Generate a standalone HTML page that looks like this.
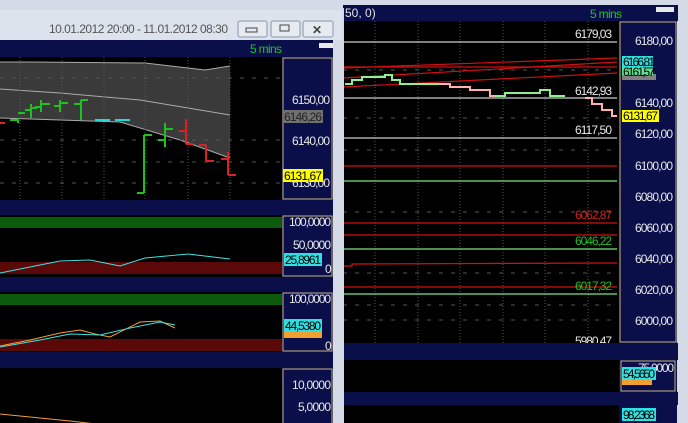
<!DOCTYPE html>
<html><head><meta charset="utf-8"><style>
html,body{margin:0;padding:0;width:688px;height:423px;overflow:hidden;background:#d4dbe6}
svg{display:block;font-family:"Liberation Sans",sans-serif}
</style></head><body>
<svg width="688" height="423" viewBox="0 0 688 423" xmlns="http://www.w3.org/2000/svg">
<rect x="0" y="0" width="688" height="423" fill="#d4dbe6"/>
<!-- RIGHT WINDOW -->
<rect x="343" y="5" width="335" height="16" fill="#0a0f4a"/>
<text x="345" y="17" fill="#e0e0e0" font-size="12">50, 0)</text>
<text x="590" y="18" fill="#22c322" font-size="12" textLength="32">5 mins</text>
<rect x="656" y="7" width="18" height="5" fill="#e8e8e8"/>
<rect x="343" y="21" width="276" height="322" fill="#000"/>
<rect x="619" y="21" width="58" height="322" fill="#0a0f4a"/>
<rect x="620" y="22" width="56" height="320" fill="none" stroke="#c8b080" stroke-width="1"/>
<g stroke="#555" stroke-dasharray="1,2">
<line x1="375" y1="21" x2="375" y2="343"/><line x1="418" y1="21" x2="418" y2="343"/><line x1="460" y1="21" x2="460" y2="343"/><line x1="503" y1="21" x2="503" y2="343"/><line x1="545" y1="21" x2="545" y2="343"/><line x1="588" y1="21" x2="588" y2="343"/>
</g>
<g stroke="#555" stroke-dasharray="4,8">
<line x1="343" y1="70" x2="617" y2="70"/><line x1="343" y1="118" x2="617" y2="118"/><line x1="343" y1="150" x2="617" y2="150"/><line x1="343" y1="212" x2="617" y2="212"/><line x1="343" y1="273" x2="617" y2="273"/><line x1="343" y1="305" x2="617" y2="305"/><line x1="343" y1="320" x2="617" y2="320"/>
</g>
<line x1="343" y1="42" x2="617" y2="42" stroke="#fff"/>
<line x1="343" y1="98" x2="617" y2="98" stroke="#fff"/>
<line x1="343" y1="138" x2="617" y2="138" stroke="#fff"/>
<g stroke="#d01010" stroke-width="1.2">
<line x1="343" y1="68" x2="617" y2="58"/><line x1="343" y1="67" x2="617" y2="67"/><line x1="343" y1="78" x2="617" y2="62"/><line x1="343" y1="87" x2="617" y2="73"/>
<line x1="343" y1="166" x2="617" y2="166"/><line x1="343" y1="223" x2="617" y2="223"/><line x1="343" y1="235" x2="617" y2="235"/>
<polyline fill="none" points="343,266 352,266 352,264 617,263"/>
<line x1="343" y1="287" x2="617" y2="287"/>
</g>
<g stroke="#7ee27e" stroke-width="1.2"><line x1="343" y1="181" x2="617" y2="181"/><line x1="343" y1="249" x2="617" y2="249"/><line x1="343" y1="294" x2="617" y2="294"/></g>
<polyline fill="none" stroke="#90ee90" stroke-width="2" points="345,84 352,84 352,80 362,80 362,77 385,77 385,75 392,75 392,80 400,80 400,84 440,84"/>
<polyline fill="none" stroke="#ffb0b0" stroke-width="2" points="440,84 450,84 450,87 470,87 470,90 490,90 490,96 495,96"/>
<polyline fill="none" stroke="#90ee90" stroke-width="2" points="495,96 505,96 505,93 540,93 540,90 550,90 550,96 565,96 M569,123 569,101 580,101 580,98 585,98"/>
<polyline fill="none" stroke="#ffb0b0" stroke-width="2" points="585,98 592,98 592,104 602,104 602,110 612,110 612,116 617,116"/>
<g font-size="12" fill="#e8e8e8">
<text x="575" y="38" textLength="37">6179,03</text><text x="575" y="95" textLength="37">6142,93</text><text x="575" y="134" textLength="37">6117,50</text>
<text x="575" y="219" fill="#d02020" textLength="37">6062,87</text><text x="575" y="245" fill="#20c020" textLength="37">6046,22</text><text x="575" y="290" fill="#20c020" textLength="37">6017,32</text><text x="575" y="345" textLength="37">5980,47</text>
<text x="635" y="45" textLength="38">6180,00</text><text x="635" y="107" textLength="38">6140,00</text><text x="635" y="138" textLength="38">6120,00</text><text x="635" y="170" textLength="38">6100,00</text><text x="635" y="201" textLength="38">6080,00</text><text x="635" y="232" textLength="38">6060,00</text><text x="635" y="263" textLength="38">6040,00</text><text x="635" y="294" textLength="38">6020,00</text><text x="635" y="325" textLength="38">6000,00</text>
</g>
<rect x="622" y="74" width="34" height="6" fill="#808080"/>
<rect x="622" y="56" width="31" height="11" fill="#30e0e0"/><rect x="622" y="67" width="31" height="8" fill="#60e090"/>
<rect x="622" y="110" width="37" height="12" fill="#ffff00"/>
<g font-size="12" fill="#000"><text x="623" y="66" textLength="32">6166,81</text><text x="623" y="76" textLength="32">6161,57</text><text x="623" y="120" textLength="35">6131,67</text></g>
<rect x="343" y="343" width="335" height="17" fill="#0a0f4a"/>
<rect x="343" y="360" width="276" height="32" fill="#000"/>
<rect x="619" y="360" width="58" height="32" fill="#0a0f4a"/>
<rect x="621" y="361" width="54" height="30" fill="none" stroke="#c8b080"/>
<text x="638" y="372" font-size="12" fill="#e8e8e8" textLength="36">75,0000</text>
<rect x="622" y="367" width="34" height="13" fill="#30e0e0"/><rect x="622" y="380" width="30" height="5" fill="#f0a030"/>
<text x="623" y="378" font-size="12" fill="#000" textLength="32">54,5650</text>
<rect x="343" y="392" width="335" height="13" fill="#0a0f4a"/>
<rect x="343" y="405" width="276" height="18" fill="#000"/>
<rect x="619" y="405" width="58" height="18" fill="#0a0f4a"/>
<rect x="622" y="408" width="34" height="13" fill="#30e0e0"/>
<text x="623" y="419" font-size="12" fill="#000" textLength="32">98,2368</text>
<!-- LEFT WINDOW -->
<rect x="0" y="8" width="344" height="415" fill="#d4dbe6"/>
<rect x="0" y="10" width="342" height="30" fill="#dde3ec"/>
<text x="49" y="33" font-size="12" fill="#555" textLength="179">10.01.2012 20:00 - 11.01.2012 08:30</text>
<g fill="#e6ebf2" stroke="#8a96a8"><rect x="238" y="21" width="29" height="16" rx="2"/><rect x="271" y="21" width="29" height="16" rx="2"/><rect x="303" y="21" width="30" height="16" rx="2"/></g>
<rect x="246" y="28" width="11" height="4" fill="none" stroke="#444"/>
<rect x="280" y="25" width="9" height="6" fill="none" stroke="#444"/>
<text x="312" y="34" font-size="12" fill="#444" font-weight="bold">✕</text>
<rect x="0" y="40" width="333" height="17" fill="#0a0f4a"/>
<text x="250" y="53" fill="#22c322" font-size="12" textLength="32">5 mins</text>
<rect x="319" y="43" width="14" height="5" fill="#e8e8e8"/>
<rect x="0" y="57" width="282" height="143" fill="#000"/>
<rect x="282" y="57" width="51" height="143" fill="#0a0f4a"/>
<rect x="283" y="58" width="49" height="141" fill="none" stroke="#c8b080"/>
<polygon points="0,62 30,62 145,63 205,70 230,66 230,158 180,140 120,122 0,118" fill="#3a3a3a"/>
<polyline fill="none" stroke="#aaa" points="0,62 30,62 145,63 205,70 230,66"/>
<polyline fill="none" stroke="#aaa" points="0,89 60,93 140,100 230,115"/>
<polyline fill="none" stroke="#aaa" points="0,118 120,122 180,140 230,158"/>
<g stroke="#555" stroke-dasharray="4,8"><line x1="0" y1="78" x2="280" y2="78"/><line x1="0" y1="140" x2="280" y2="140"/><line x1="0" y1="162" x2="280" y2="162"/><line x1="0" y1="183" x2="280" y2="183"/></g>
<g stroke="#555" stroke-dasharray="1,2"><line x1="20" y1="57" x2="20" y2="423"/><line x1="62" y1="57" x2="62" y2="423"/><line x1="104" y1="57" x2="104" y2="423"/><line x1="145" y1="57" x2="145" y2="423"/><line x1="188" y1="57" x2="188" y2="423"/><line x1="230" y1="57" x2="230" y2="423"/></g>
<g stroke="#20c020" stroke-width="2" fill="none">
<path d="M10,120 H18 M18,118 V123 M18,113 H25"/><path d="M31,104 V118 M31,108 H37 M25,110 H31"/><path d="M41,100 V112 M41,104 H50 M35,107 H41"/><path d="M60,100 V112 M60,103 H68 M54,106 H60"/><path d="M81,100 V120 M81,100 H88 M74,104 H81"/>
<path d="M144,135 V193 M137,193 H144 M144,135 H152"/><path d="M165,123 V147 M165,129 H173 M158,140 H165"/>
</g>
<g stroke="#22d8d8" stroke-width="2"><line x1="95" y1="120" x2="110" y2="120"/><line x1="115" y1="120" x2="130" y2="120"/></g>
<g stroke="#e02020" stroke-width="2" fill="none"><path d="M0,123 H5"/><path d="M186,119 V144 M179,131 H186 M186,144 H193"/><path d="M206,145 V161 M199,145 H206 M206,161 H214"/><path d="M228,152 V175 M221,159 H228 M228,175 H236"/></g>
<g font-size="12" fill="#e8e8e8"><text x="292" y="104" textLength="38">6150,00</text><text x="292" y="145" textLength="38">6140,00</text><text x="292" y="187" textLength="38">6130,00</text></g>
<rect x="283" y="110" width="40" height="13" fill="#707070"/><text x="284" y="121" font-size="12" fill="#222" textLength="38">6146,26</text>
<rect x="283" y="169" width="40" height="13" fill="#ffff00"/><text x="284" y="180" font-size="12" fill="#000" textLength="38">6131,67</text>
<rect x="0" y="200" width="333" height="15" fill="#0a0f4a"/>
<rect x="0" y="215" width="282" height="62" fill="#000"/>
<rect x="0" y="217" width="282" height="11" fill="#0c5a0c"/>
<rect x="0" y="262" width="282" height="12" fill="#5a0808"/>
<polyline fill="none" stroke="#40e0e0" points="0,273 60,261 90,260 120,266 145,258 188,254 230,259"/>
<rect x="282" y="215" width="51" height="62" fill="#0a0f4a"/><rect x="283" y="216" width="49" height="60" fill="none" stroke="#c8b080"/>
<g font-size="12" fill="#e8e8e8"><text x="289" y="226" textLength="42">100,0000</text><text x="293" y="249" textLength="38">50,0000</text><text x="325" y="273">0</text></g>
<rect x="284" y="253" width="38" height="13" fill="#30e0e0"/><text x="285" y="264" font-size="12" fill="#000" textLength="36">25,8961</text>
<rect x="0" y="277" width="333" height="15" fill="#0a0f4a"/>
<rect x="0" y="292" width="282" height="60" fill="#000"/>
<rect x="0" y="294" width="282" height="11" fill="#0c5a0c"/>
<rect x="0" y="339" width="282" height="12" fill="#5a0808"/>
<polyline fill="none" stroke="#f0a030" points="0,346 30,340 60,333 80,330 95,334 110,337 140,322 160,321 175,328"/>
<polyline fill="none" stroke="#40e0e0" points="0,347 40,340 70,334 100,335 130,328 160,322 175,325"/>
<rect x="282" y="292" width="51" height="60" fill="#0a0f4a"/><rect x="283" y="293" width="49" height="58" fill="none" stroke="#c8b080"/>
<g font-size="12" fill="#e8e8e8"><text x="289" y="303" textLength="42">100,0000</text><text x="325" y="350">0</text></g>
<rect x="284" y="319" width="38" height="13" fill="#30e0e0"/><rect x="284" y="332" width="38" height="6" fill="#f0a030"/><text x="285" y="330" font-size="12" fill="#000" textLength="36">44,5380</text>
<rect x="0" y="352" width="333" height="16" fill="#0a0f4a"/>
<rect x="0" y="368" width="282" height="55" fill="#000"/>
<polyline fill="none" stroke="#f0a030" points="0,414 40,418 70,421 96,424"/>
<rect x="282" y="368" width="51" height="55" fill="#0a0f4a"/><rect x="283" y="369" width="49" height="56" fill="none" stroke="#c8b080"/>
<g font-size="12" fill="#e8e8e8"><text x="292" y="389" textLength="39">10,0000</text><text x="298" y="411" textLength="33">5,0000</text></g>
</svg>
</body></html>
